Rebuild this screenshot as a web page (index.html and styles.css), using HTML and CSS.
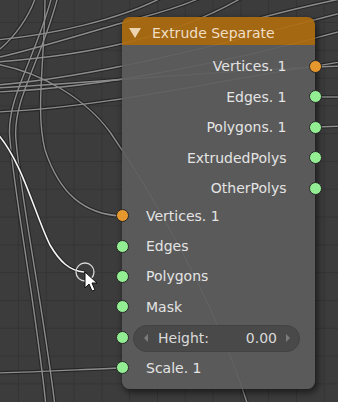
FILE: index.html
```html
<!DOCTYPE html>
<html lang="en">
<head>
    <meta charset="UTF-8">
    <meta name="viewport" content="width=device-width, initial-scale=1.0">
    <title>Node Editor - Extrude Separate</title>
    <link rel="stylesheet" href="styles.css">
</head>
<body>

    <div class="editor">
        <!-- links between nodes: each path is drawn twice, dark outline then grey core -->
        <svg class="wires" width="338" height="402" viewBox="0 0 338 402">
            <defs>
                <g id="links">
                    <path d="M36,-4 C30,15 15,38 -4,52"/>
                    <path d="M-4,40 C50,35 120,20 165,-4"/>
                    <path d="M-4,58 C40,48 95,30 140,18 S190,2 205,-4"/>
                    <path d="M-4,62 C80,56 170,40 245,-4"/>
                    <path d="M-4,85 C90,78 220,45 345,12"/>
                    <path d="M-4,92 C100,88 230,62 345,30"/>
                    <path d="M-4,88 C80,84 220,70 345,66"/>
                    <path d="M-4,112 C100,108 220,80 315,66 S335,55 345,50"/>
                    <path d="M260,18 C290,10 320,3 345,-2"/>
                    <path d="M315,97 L345,97"/>
                    <path d="M315,127 L345,126"/>
                    <path d="M52,-4 C35,60 5,100 10,140 C15,200 35,300 46,406"/>
                    <path d="M58,-4 C42,60 12,100 16,140 C21,200 42,300 55,406"/>
                    <path d="M45,-4 C45,60 35,110 45,150 C60,195 85,214 121,216"/>
                    <path d="M-4,64 C40,72 85,98 110,132 C150,190 215,300 248,406"/>
                    <path d="M-4,373 C40,372 90,369 121,368"/>
                </g>
                <path id="active-link" d="M-4,132 C22,160 35,215 50,245 C60,262 70,271 84,272"/>
            </defs>
            <use href="#links" class="wire-outline"/>
            <use href="#links" class="wire-core"/>
            <use href="#active-link" class="wire-outline"/>
            <use href="#active-link" class="wire-core active"/>
        </svg>

        <div class="node">
            <div class="node-header">
                <span class="collapse"></span>
                <span class="node-title">Extrude Separate</span>
            </div>
            <div class="node-body">
                <div class="outputs">
                    <div class="row out"><span class="label">Vertices. 1</span><span class="socket vertex"></span></div>
                    <div class="row out"><span class="label">Edges. 1</span><span class="socket"></span></div>
                    <div class="row out"><span class="label">Polygons. 1</span><span class="socket"></span></div>
                    <div class="row out"><span class="label">ExtrudedPolys</span><span class="socket"></span></div>
                    <div class="row out"><span class="label">OtherPolys</span><span class="socket"></span></div>
                </div>
                <div class="inputs">
                    <div class="row in"><span class="socket vertex"></span><span class="label">Vertices. 1</span></div>
                    <div class="row in"><span class="socket"></span><span class="label">Edges</span></div>
                    <div class="row in"><span class="socket"></span><span class="label">Polygons</span></div>
                    <div class="row in"><span class="socket"></span><span class="label">Mask</span></div>
                    <div class="row in">
                        <span class="socket"></span>
                        <div class="field">
                            <span class="arrow left"></span>
                            <span class="field-name">Height:</span>
                            <span class="field-value">0.00</span>
                            <span class="arrow right"></span>
                        </div>
                    </div>
                    <div class="row in"><span class="socket"></span><span class="label">Scale. 1</span></div>
                </div>
            </div>
        </div>

        <!-- link drag cursor -->
        <svg class="cursor" width="30" height="40" viewBox="0 0 30 40">
            <circle cx="11" cy="11" r="9" />
            <path d="M11,11 L11,27 L15,23 L18,30 L21,29 L18,22 L23,22 Z"/>
        </svg>
    </div>

</body>
</html>
```

FILE: styles.css
```css
* {
    margin: 0;
    padding: 0;
    box-sizing: border-box;
}

body {
    font-family: "DejaVu Sans", Verdana, sans-serif;
    font-size: 14px;
    background-color: #3c3c3c;
    overflow: hidden;
}

.editor {
    position: relative;
    width: 338px;
    height: 402px;
    overflow: hidden;
    background-color: #3c3c3c;
    background-image:
        linear-gradient(#343434 1px, transparent 1px),
        linear-gradient(90deg, #343434 1px, transparent 1px);
    background-size: 27.8px 27.8px;
    background-position: 18px 22px;
}

.wires {
    position: absolute;
    left: 0;
    top: 0;
}

.wire-outline {
    fill: none;
    stroke: #262626;
    stroke-width: 3.6;
}

.wire-core {
    fill: none;
    stroke: #8c8c8c;
    stroke-width: 1.4;
}

.wire-core.active {
    stroke: #f4f4f4;
    stroke-width: 1.6;
}

/* node */
.node {
    position: absolute;
    left: 122px;
    top: 17px;
    width: 193px;
    border-radius: 8px;
    box-shadow: 2px 3px 6px 1px rgba(0, 0, 0, 0.5);
}

.node-header {
    height: 28px;
    display: flex;
    align-items: center;
    padding-left: 7px;
    padding-top: 4px;
    background: rgba(174, 107, 15, 0.92);
    border-radius: 8px 8px 0 0;
    color: #f0dfc6;
}

.collapse {
    width: 0;
    height: 0;
    border-left: 6px solid transparent;
    border-right: 6px solid transparent;
    border-top: 10px solid #ecd3ad;
    margin-right: 11px;
}

.node-body {
    padding: 6px 0 6px;
    background: rgba(93, 93, 93, 0.92);
    border-radius: 0 0 8px 8px;
    color: #e4e4e4;
}

.row {
    display: flex;
    align-items: center;
    height: 30.5px;
}

.inputs {
    margin-top: -3px;
}

.inputs .row {
    height: 30.4px;
}

.row.out {
    justify-content: flex-end;
}

.row.out .label {
    margin-right: 22px;
}

.row.out .socket {
    margin-right: -6.5px;
}

.row.in .socket {
    margin-left: -6.5px;
}

.row.in .label {
    margin-left: 17.5px;
}

.socket {
    width: 13px;
    height: 13px;
    flex: none;
    border-radius: 50%;
    background: #93ee93;
    border: 1px solid #262626;
}

.socket.vertex {
    background: #e6972e;
}

/* number field */
.field {
    flex: 1;
    display: flex;
    align-items: center;
    height: 27px;
    margin: 2px 15px 0 4.5px;
    padding: 0 9px 0 10px;
    background: #494949;
    border: 1px solid #424242;
    border-radius: 13.5px;
    color: #dadada;
}

.field-name {
    margin-left: 10px;
}

.field-value {
    margin-left: auto;
    margin-right: 9px;
}

.arrow {
    width: 0;
    height: 0;
    border-top: 4px solid transparent;
    border-bottom: 4px solid transparent;
}

.arrow.left {
    border-right: 4px solid #7c7c7c;
}

.arrow.right {
    border-left: 4px solid #7c7c7c;
}

.cursor {
    position: absolute;
    left: 74px;
    top: 261px;
}

.cursor circle {
    fill: none;
    stroke: #d8d8d8;
    stroke-width: 1.3;
}

.cursor path {
    fill: #ffffff;
    stroke: #111111;
    stroke-width: 1;
}
```
